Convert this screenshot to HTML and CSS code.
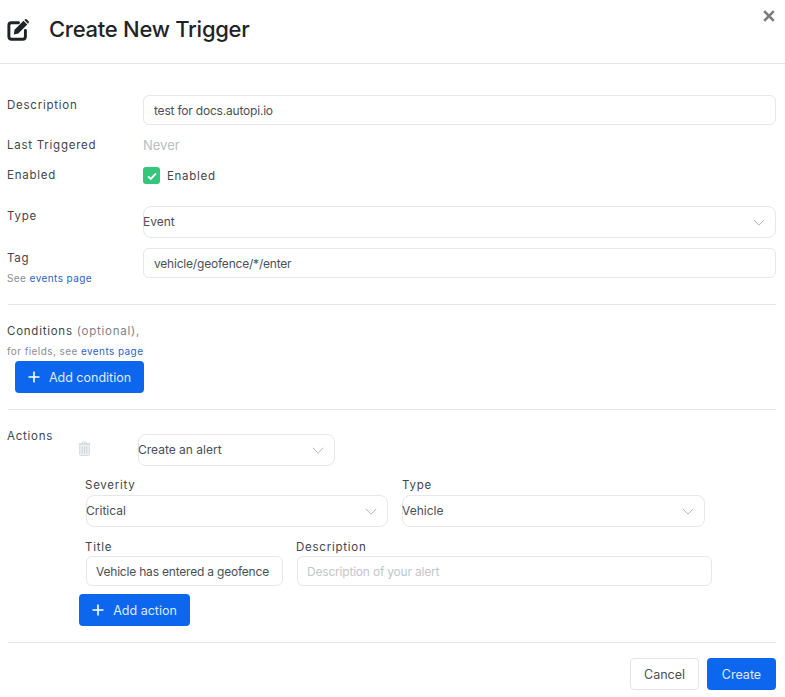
FILE: index.html
```html
<!DOCTYPE html>
<html>
<head>
  <meta charset="UTF-8">
  <title>Create New Trigger</title>
  <link rel="stylesheet" href="styles.css">
</head>
<body>
  <div class="modal">
    <div class="modal-header">
      <svg class="edit-icon" viewBox="0 0 22 22" width="23" height="23">
        <path d="M11 4.6H4.2A2.4 2.4 0 0 0 1.8 7v11a2.4 2.4 0 0 0 2.4 2.4h11a2.4 2.4 0 0 0 2.4-2.4v-6" fill="none" stroke="#1f2328" stroke-width="2.8" stroke-linecap="round"/>
        <path d="M7.2 11.2 15.8 2.7l3.6 3.6-8.6 8.6-4.3.8z" fill="#1f2328"/>
        <path d="M17 1.5a1.5 1.5 0 0 1 2.1 0l1.4 1.4a1.5 1.5 0 0 1 0 2.1l-.4.4-3.5-3.5z" fill="#1f2328"/>
      </svg>
      <h2>Create New Trigger</h2>
      <svg class="close-icon" viewBox="0 0 12 12" width="12" height="12">
        <path d="M1.2 1.2 10.8 10.8M10.8 1.2 1.2 10.8" stroke="#7b7b7b" stroke-width="2.6"/>
      </svg>
    </div>

    <div class="modal-body">
      <!-- general -->
      <div class="row row-description">
        <label>Description</label>
        <input type="text" value="test for docs.autopi.io">
      </div>
      <div class="row row-last">
        <label>Last Triggered</label>
        <span class="never">Never</span>
      </div>
      <div class="row row-enabled">
        <label>Enabled</label>
        <div class="check-wrap">
          <span class="checkbox">
            <svg viewBox="0 0 12 12" width="12" height="12"><path d="M2 6.4 4.8 9 10 3.4" fill="none" stroke="#fff" stroke-width="1.9"/></svg>
          </span>
          <span class="check-label">Enabled</span>
        </div>
      </div>
      <div class="row row-type">
        <label>Type</label>
        <div class="select">
          <span>Event</span>
          <svg class="chevron" viewBox="0 0 12 7" width="12" height="7"><path d="M.8.8 6 6.2 11.2.8" fill="none" stroke="#b4b8bc" stroke-width="1"/></svg>
        </div>
      </div>
      <div class="row row-tag">
        <div>
          <label>Tag</label>
          <div class="small-text">See <a href="#">events page</a></div>
        </div>
        <input type="text" value="vehicle/geofence/*/enter">
      </div>

      <hr class="rule rule-conditions">

      <!-- conditions -->
      <div class="conditions">
        <label>Conditions <span class="optional">(optional),</span></label>
        <div class="small-text">for fields, see <a href="#">events page</a></div>
        <button type="button" class="btn-primary btn-condition">
          <svg viewBox="0 0 12 12" width="12" height="12"><path d="M6 .5v11M.5 6h11" stroke="#fff" stroke-width="1.6"/></svg>
          Add condition
        </button>
      </div>

      <hr class="rule rule-actions">

      <!-- actions -->
      <div class="actions-head">
        <label>Actions</label>
        <svg class="trash-icon" viewBox="0 0 13 15" width="13" height="15">
          <path d="M.5 2.6h12M4.5 2.4V1h4v1.4" fill="none" stroke="#d9dbdd" stroke-width="1"/>
          <path d="M1.6 3.4h9.8v10a1.1 1.1 0 0 1-1.1 1.1H2.7a1.1 1.1 0 0 1-1.1-1.1z" fill="#eeeff0" stroke="#d9dbdd" stroke-width="1"/>
          <path d="M4.2 5.5v7M6.5 5.5v7M8.8 5.5v7" stroke="#cfd2d4" stroke-width="1"/>
        </svg>
        <div class="select select-action">
          <span>Create an alert</span>
          <svg class="chevron" viewBox="0 0 12 7" width="12" height="7"><path d="M.8.8 6 6.2 11.2.8" fill="none" stroke="#b4b8bc" stroke-width="1"/></svg>
        </div>
      </div>

      <div class="alert-fields">
        <div class="alert-row">
          <div class="field field-severity">
            <label>Severity</label>
            <div class="select">
              <span>Critical</span>
              <svg class="chevron" viewBox="0 0 12 7" width="12" height="7"><path d="M.8.8 6 6.2 11.2.8" fill="none" stroke="#b4b8bc" stroke-width="1"/></svg>
            </div>
          </div>
          <div class="field field-type">
            <label>Type</label>
            <div class="select">
              <span>Vehicle</span>
              <svg class="chevron" viewBox="0 0 12 7" width="12" height="7"><path d="M.8.8 6 6.2 11.2.8" fill="none" stroke="#b4b8bc" stroke-width="1"/></svg>
            </div>
          </div>
        </div>
        <div class="alert-row alert-row-second">
          <div class="field field-title">
            <label>Title</label>
            <input type="text" value="Vehicle has entered a geofence">
          </div>
          <div class="field field-desc">
            <label>Description</label>
            <input type="text" placeholder="Description of your alert">
          </div>
        </div>
      </div>

      <button type="button" class="btn-primary btn-action">
        <svg viewBox="0 0 12 12" width="12" height="12"><path d="M6 .5v11M.5 6h11" stroke="#fff" stroke-width="1.6"/></svg>
        Add action
      </button>

      <hr class="rule rule-footer">

      <div class="footer">
        <button type="button" class="btn-cancel">Cancel</button>
        <button type="button" class="btn-primary btn-create">Create</button>
      </div>
    </div>
  </div>
</body>
</html>
```

FILE: styles.css
```css
html, body {
  margin: 0;
  padding: 0;
  background: white;
}
body {
  font-family: Inter, "Noto Sans", Arial, sans-serif;
  font-size: 13px;
  color: #495057;
  overflow: hidden;
}
.modal {
  position: relative;
  width: 785px;
  height: 697px;
}
.modal-header {
  display: flex;
  align-items: center;
  height: 58px;
  padding-left: 7px;
  border-bottom: 1px solid #e3e4e6;
  padding-bottom: 5px;
  box-sizing: content-box;
}
.modal-header h2 {
  margin: 0 0 0 19px;
  font-size: 22px;
  font-weight: 500;
  color: #1f2328;
  letter-spacing: -0.27px;
}
.edit-icon {
  flex: none;
}
.close-icon {
  position: absolute;
  top: 10px;
  right: 10px;
}
.modal-body {
  padding: 31px 9px 0 8px;
}
label {
  display: block;
  font-size: 11.5px;
  font-weight: 400;
  color: #3f464c;
  letter-spacing: 0.75px;
}
input[type="text"] {
  width: 100%;
  height: 30px;
  padding: 0 10px;
  border: 1px solid #e6e7e9;
  border-radius: 6px;
  font-family: inherit;
  font-size: 12px;
  letter-spacing: -0.2px;
  color: #495057;
  box-sizing: border-box;
  outline: none;
  background: white;
}
input::placeholder {
  color: #c3c6c9;
  opacity: 1;
}
.select {
  display: flex;
  align-items: center;
  justify-content: space-between;
  height: 32px;
  padding-right: 10px;
  border: 1px solid #e6e7e9;
  border-radius: 8px;
  font-size: 12px;
  color: #495057;
  box-sizing: border-box;
  background: white;
}
.select span {
  margin-left: -1px;
  padding-bottom: 2px;
}
.row {
  display: grid;
  grid-template-columns: 136px 633px;
  margin-left: -1px;
}
.row-description {
  height: 30px;
  margin-bottom: 10px;
}
.row-description label {
  padding-top: 3px;
}
.row-last {
  height: 20px;
  align-items: center;
  margin-bottom: 12px;
}
.never {
  font-size: 13px;
  color: #b9bec3;
}
.row-enabled {
  height: 18px;
  align-items: center;
  margin-bottom: 21px;
}
.row-enabled label {
  padding-bottom: 2px;
}
.check-wrap {
  display: flex;
  align-items: center;
  align-self: start;
  gap: 7px;
}
.checkbox {
  display: flex;
  align-items: center;
  justify-content: center;
  width: 17px;
  height: 17px;
  border-radius: 3px;
  background: #34c77b;
}
.check-label {
  font-size: 11.5px;
  font-weight: 400;
  color: #3f464c;
  letter-spacing: 0.7px;
}
.row-type {
  margin-bottom: 10px;
}
.row-type label {
  padding-top: 3px;
}
.row-tag {
  height: 38px;
}
.row-tag label {
  padding-top: 3px;
}
.small-text {
  margin-top: 7px;
  font-size: 10px;
  color: #868e96;
  letter-spacing: 0.42px;
}
.small-text a {
  color: #2a64c4;
  text-decoration: none;
}
.rule {
  height: 1px;
  margin: 0;
  border: none;
  background: #e3e4e6;
}
.rule-conditions {
  margin-top: 18px;
}
.conditions {
  padding-top: 19px;
  margin-left: -1px;
}
.optional {
  color: #7c8389;
}
.btn-primary {
  display: flex;
  align-items: center;
  justify-content: center;
  height: 32px;
  border: none;
  border-radius: 4px;
  background: #0d67ee;
  color: #dfeaff;
  font-family: inherit;
  font-size: 12.5px;
  padding: 0;
}
.btn-primary svg {
  margin-right: 9px;
}
.btn-condition {
  width: 129px;
  margin: 4px 0 0 8px;
}
.rule-actions {
  margin-top: 16px;
}
.actions-head {
  display: flex;
  height: 32px;
  margin-top: 24px;
  margin-left: -1px;
}
.actions-head label {
  width: 71px;
  margin-top: -5px;
}
.trash-icon {
  margin-top: 7px;
}
.select-action {
  width: 197px;
  margin-left: 47px;
}
.alert-fields {
  margin-left: 78px;
}
.alert-row {
  display: flex;
  margin-top: 12px;
}
.alert-row-second {
  margin-top: 13px;
}
.field label {
  margin: 0 0 3px -1px;
}
.field-type label {
  margin-left: 0;
}
.alert-row-second .field label {
  margin-bottom: 2px;
}
.field input[type="text"] {
  padding: 0 9px;
}
.field-severity {
  width: 302px;
  margin-right: 14px;
}
.field-type {
  width: 303px;
}
.field-title {
  width: 197px;
  margin-right: 14px;
}
.field-desc {
  width: 415px;
}
.btn-action {
  width: 111px;
  margin: 8px 0 0 71px;
}
.rule-footer {
  margin-top: 16px;
}
.footer {
  display: flex;
  justify-content: flex-end;
  gap: 8px;
  margin-top: 15px;
}
.btn-cancel {
  width: 69px;
  height: 32px;
  border: 1px solid #e3e4e6;
  border-radius: 4px;
  background: white;
  color: #495057;
  font-family: inherit;
  font-size: 12.5px;
}
.btn-create {
  width: 69px;
}
```
